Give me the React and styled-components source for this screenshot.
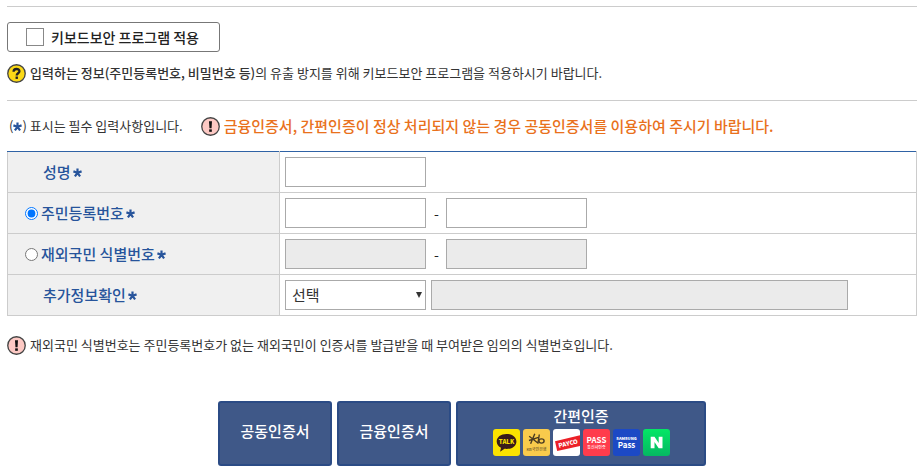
import React, { useState } from 'react';
import styled, { createGlobalStyle } from 'styled-components';

// ========================== STYLES:BEGIN ========================== //
const GlobalStyle = createGlobalStyle`
  * {
    box-sizing: border-box;
  }

  body {
    margin: 0;
    background: #fff;
    color: #333;
    font-family: 'Noto Sans CJK KR', sans-serif;
    font-size: 13px;
    line-height: 20px;
  }

  input,
  select,
  button {
    margin: 0;
    font-family: inherit;
  }
`;

const Page = styled.main`
  padding: 6px 5px 4px 7px;
`;

const SecurityNotice = styled.section`
  display: flex;
  flex-direction: column;
  align-items: flex-start;
  gap: 11px;
  padding: 15px 0 17px;
  border-top: 1px solid #ccc;
  border-bottom: 1px solid #ccc;
`;

const SecurityToggle = styled.label`
  display: flex;
  align-items: center;
  gap: 7px;
  height: 30px;
  padding: 0 20px 0 18px;
  border: 1px solid #777;
  border-radius: 3px;
  color: #222;
  font-size: 14px;
  font-weight: 500;
`;

const CheckBox = styled.input`
  width: 18px;
  height: 18px;
  appearance: none;
  border: 1px solid #888;
  background: #fff;

  &:checked {
    background: #2a4f8f;
    box-shadow: inset 0 0 0 3px #fff;
  }
`;

const Message = styled.p`
  display: flex;
  align-items: center;
  gap: 4px;
  margin: 0;
`;

const Strong = styled.strong`
  font-weight: 500;
`;

const Guide = styled.div`
  display: flex;
  align-items: center;
  gap: 18px;
  padding: 15px 0 15px 2px;
`;

const Warning = styled(Message)`
  color: #e9711c;
  font-size: 15px;
  font-weight: 500;
`;

const MarkIcon = styled.svg`
  flex: none;
  width: 19px;
  height: 19px;
`;

const StarIcon = styled.svg`
  width: 9px;
  height: 9px;
  margin-left: ${props => (props.$tight ? 0 : '2px')};
`;

const FormTable = styled.table`
  width: 100%;
  table-layout: fixed;
  border-collapse: collapse;
  border: 1px solid #ccc;
  border-top-color: #2f62a5;
`;

const HeadCell = styled.th`
  width: 272px;
  height: 41px;
  padding: 0 0 0 ${props => (props.$choice ? '17px' : '35px')};
  border: 1px solid #ccc;
  border-top-color: ${props => (props.$first ? '#2f62a5' : '#ccc')};
  background: #f0f0f0;
  color: #27549b;
  font-size: 15px;
  font-weight: 500;
  text-align: left;
`;

const Cell = styled.td`
  padding: 0 5px;
  border-bottom: 1px solid #ccc;
`;

const FieldLabel = styled.label`
  display: flex;
  align-items: center;
`;

const Radio = styled.input`
  width: 13px;
  height: 13px;
  margin-right: 3px;
  accent-color: #0075ff;
`;

const Fields = styled.div`
  display: flex;
  align-items: center;
  gap: ${props => (props.$split ? '8px' : '5px')};
`;

const TextInput = styled.input`
  flex: 0 1 ${props => (props.$wide ? '417px' : '141px')};
  min-width: 0;
  height: 30px;
  padding: 0 6px;
  border: 1px solid #aaa;
  border-radius: 0;
  background: #fff;
  font-size: 14px;

  &:disabled {
    background: #ebebeb;
  }
`;

const Dash = styled.span`
  width: 4px;
  color: #222;
  font-size: 14px;
  text-align: center;
`;

const SelectBox = styled.div`
  display: grid;
  flex: 0 1 141px;
  align-items: center;

  & > * {
    grid-area: 1 / 1;
  }
`;

const Select = styled.select`
  width: 100%;
  height: 30px;
  padding: 0 20px 2px 6px;
  appearance: none;
  border: 1px solid #aaa;
  border-radius: 0;
  background: #fff;
  color: #333;
  font-size: 15px;
`;

const SelectArrow = styled.svg`
  justify-self: end;
  width: 6px;
  height: 6px;
  margin-right: 4px;
  pointer-events: none;
`;

const Footnote = styled(Message)`
  padding: 19px 0 46px;
`;

const Actions = styled.div`
  display: flex;
  justify-content: center;
  gap: 5px;
`;

const ActionButton = styled.button`
  display: flex;
  flex-direction: column;
  align-items: center;
  justify-content: center;
  gap: 2px;
  width: ${props => (props.$wide ? '250px' : '114px')};
  height: 65px;
  padding: 0 0 6px;
  border: 2px solid #2b4b85;
  border-radius: 3px;
  background: #3f5888;
  color: #fff;
  font-size: 15px;
  font-weight: 500;
  line-height: 22px;
  cursor: pointer;
`;

const Providers = styled.span`
  display: flex;
  gap: 3px;
`;

const ProviderLogo = styled.svg`
  width: 27px;
  height: 27px;
  border-radius: 3px;
  background: ${props => props.$background};
  font-family: 'Noto Sans CJK KR', sans-serif;
  text-anchor: middle;
`;
// ========================== STYLES:END ========================== //

const QuestionMark = () => (
  <MarkIcon viewBox="0 0 20 20" aria-hidden="true">
    <circle cx="10" cy="10" r="9.2" fill="#fbd916" stroke="#444" strokeWidth="1.4" />
    <path
      d="M6.9 8.2C6.9 4.3 13.1 4.4 13.1 7.7C13.1 9.7 10.2 9.8 10.2 12"
      fill="none"
      stroke="#222"
      strokeWidth="2.4"
    />
    <rect x="9" y="13.2" width="2.5" height="2.5" fill="#222" />
  </MarkIcon>
);

const ExclamationMark = () => (
  <MarkIcon viewBox="0 0 20 20" aria-hidden="true">
    <circle cx="10" cy="10" r="9.2" fill="#fdc9c4" stroke="#444" strokeWidth="1.4" />
    <path d="M8.4 4.5H11.6L11.1 11.8H8.9Z" fill="#111" />
    <rect x="8.6" y="13" width="2.8" height="2.6" fill="#111" />
  </MarkIcon>
);

const Star = ({ tight }) => (
  <StarIcon $tight={tight} viewBox="0 0 9 9" aria-hidden="true">
    <path
      d="M4.5 4.8V.4M4.5 4.8L.4 3.4M4.5 4.8L8.6 3.4M4.5 4.8L1.9 8.4M4.5 4.8L7.1 8.4"
      stroke="#27549b"
      strokeWidth="2.2"
    />
  </StarIcon>
);

const TalkLogo = () => (
  <ProviderLogo $background="#fbe300" viewBox="0 0 27 27">
    <path
      d="M13.5 5C7.8 5 3.7 8.2 3.7 12.4C3.7 15.3 5.5 17.5 8 18.8L7.1 22.8L11.5 19.8C18.5 20.6 23.4 17.2 23.4 12.4C23.4 8.2 19.2 5 13.5 5Z"
      fill="#391b1b"
    />
    <text x="13.5" y="14.8" fontSize="6" fontWeight="900" fill="#fbe300">TALK</text>
  </ProviderLogo>
);

const KbLogo = () => (
  <ProviderLogo $background="#f9cb4c" viewBox="0 0 27 27">
    <g fill="none" stroke="#4a3b22" strokeWidth="1.4">
      <path d="M6.2 7.3L15.5 14.5M6 11.5L15.5 8.4M11.8 4.7L7.6 14.8M16.3 5.5L15 14" />
      <ellipse cx="18.5" cy="12" rx="2.6" ry="2.1" />
    </g>
    <text x="13.5" y="21.8" fontSize="4" fontWeight="500" fill="#655026">KB국민은행</text>
  </ProviderLogo>
);

const PaycoLogo = () => (
  <ProviderLogo $background="#fff" viewBox="0 0 27 27">
    <path d="M2 12.2L27 6.2V17L4.2 22Z" fill="#ec2027" />
    <text x="15" y="16.6" fontSize="6" fontWeight="900" fill="#fff" transform="rotate(-13 15 14)">
      PAYCO
    </text>
  </ProviderLogo>
);

const PassLogo = () => (
  <ProviderLogo $background="#ff3c4c" viewBox="0 0 27 27">
    <text x="13.5" y="13.7" fontSize="8" fontWeight="700" fill="#fff">PASS</text>
    <text x="13.5" y="20.2" fontSize="4" fill="#fff">통신사인증</text>
  </ProviderLogo>
);

const SamsungLogo = () => (
  <ProviderLogo $background="#1c49c5" viewBox="0 0 27 27">
    <text x="13.5" y="10.8" fontSize="4" fontWeight="900" fill="#fff">SAMSUNG</text>
    <text x="13.5" y="19" fontSize="8" fontWeight="700" fill="#fff">Pass</text>
  </ProviderLogo>
);

const NaverLogo = () => (
  <ProviderLogo $background="linear-gradient(#04e765, #05b862)" viewBox="0 0 27 27">
    <path d="M7.7 7.8H11.5L15.7 13.9V7.8H19.5V19.2H15.7L11.5 13.1V19.2H7.7Z" fill="#fff" />
  </ProviderLogo>
);

const idTypes = [
  { id: 'resident', name: '주민등록번호' },
  { id: 'overseas', name: '재외국민 식별번호' }
];

const App = () => {
  const [idType, setIdType] = useState('resident');

  return (
    <Page>
      <GlobalStyle />
      <SecurityNotice>
        <SecurityToggle>
          <CheckBox type="checkbox" />
          키보드보안 프로그램 적용
        </SecurityToggle>
        <Message>
          <QuestionMark />
          <span>
            <Strong>입력하는 정보(주민등록번호, 비밀번호 등)</Strong>의 유출 방지를 위해
            키보드보안 프로그램을 적용하시기 바랍니다.
          </span>
        </Message>
      </SecurityNotice>

      <Guide>
        <span>
          (<Star tight />) 표시는 필수 입력사항입니다.
        </span>
        <Warning>
          <ExclamationMark />
          금융인증서, 간편인증이 정상 처리되지 않는 경우 공동인증서를 이용하여 주시기 바랍니다.
        </Warning>
      </Guide>

      <FormTable>
        <tbody>
          <tr>
            <HeadCell scope="row" $first>
              <FieldLabel htmlFor="name">
                성명
                <Star />
              </FieldLabel>
            </HeadCell>
            <Cell>
              <Fields>
                <TextInput id="name" type="text" />
              </Fields>
            </Cell>
          </tr>
          {idTypes.map(({ id, name }) => (
            <tr key={id}>
              <HeadCell scope="row" $choice>
                <FieldLabel>
                  <Radio
                    type="radio"
                    name="idType"
                    checked={idType === id}
                    onChange={() => setIdType(id)}
                  />
                  {name}
                  <Star />
                </FieldLabel>
              </HeadCell>
              <Cell>
                <Fields $split>
                  <TextInput type="text" aria-label={name} disabled={idType !== id} />
                  <Dash>-</Dash>
                  <TextInput type="password" aria-label={name} disabled={idType !== id} />
                </Fields>
              </Cell>
            </tr>
          ))}
          <tr>
            <HeadCell scope="row">
              <FieldLabel htmlFor="extra">
                추가정보확인
                <Star />
              </FieldLabel>
            </HeadCell>
            <Cell>
              <Fields>
                <SelectBox>
                  <Select id="extra">
                    <option>선택</option>
                  </Select>
                  <SelectArrow viewBox="0 0 6 6" aria-hidden="true">
                    <path d="M0 0H6L3 6Z" fill="#333" />
                  </SelectArrow>
                </SelectBox>
                <TextInput type="text" aria-label="추가정보확인" $wide disabled />
              </Fields>
            </Cell>
          </tr>
        </tbody>
      </FormTable>

      <Footnote>
        <ExclamationMark />
        재외국민 식별번호는 주민등록번호가 없는 재외국민이 인증서를 발급받을 때 부여받은 임의의
        식별번호입니다.
      </Footnote>

      <Actions>
        <ActionButton type="button">공동인증서</ActionButton>
        <ActionButton type="button">금융인증서</ActionButton>
        <ActionButton type="button" $wide>
          간편인증
          <Providers>
            <TalkLogo />
            <KbLogo />
            <PaycoLogo />
            <PassLogo />
            <SamsungLogo />
            <NaverLogo />
          </Providers>
        </ActionButton>
      </Actions>
    </Page>
  );
};

export default App;
